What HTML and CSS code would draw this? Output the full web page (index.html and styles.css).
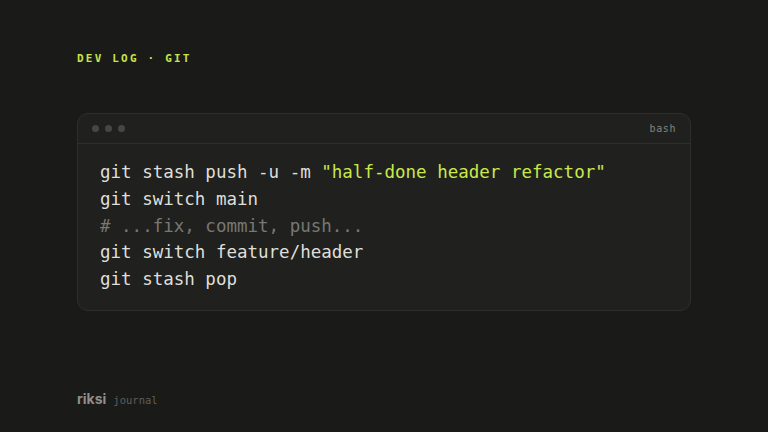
FILE: index.html
```html
<!DOCTYPE html>
<html>
<head>
<meta charset="utf-8">
<link rel="stylesheet" href="styles.css">
</head>
<body>
<div class="page">
  <div class="kicker">DEV LOG · GIT</div>
  <div class="card">
    <div class="bar">
      <div class="dots"><span class="dot"></span><span class="dot"></span><span class="dot"></span></div>
      <span class="lang">bash</span>
    </div>
    <div class="code">
      <div class="line">git stash push -u -m <span class="str">"half-done header refactor"</span></div>
      <div class="line">git switch main</div>
      <div class="line comment"># ...fix, commit, push...</div>
      <div class="line">git switch feature/header</div>
      <div class="line">git stash pop</div>
    </div>
  </div>
  <div class="footer"><span class="brand">riksi</span><span class="sub">journal</span></div>
</div>
</body>
</html>
```
FILE: styles.css
```css
html, body { margin: 0; padding: 0; }
body { background: #1a1a18; width: 768px; height: 432px; overflow: hidden; }
.page {
  height: 432px;
  box-sizing: border-box;
  padding: 52px 77px 0 77px;
  display: flex;
  flex-direction: column;
}
.kicker {
  font-family: "DejaVu Sans Mono", monospace;
  font-weight: bold;
  font-size: 11px;
  letter-spacing: 2.2px;
  color: #c5e34a;
  line-height: 14px;
}
.card {
  margin-top: 47px;
  height: 198px;
  box-sizing: border-box;
  background: #20211e;
  border: 1px solid #2e2f2b;
  border-radius: 11px;
  display: flex;
  flex-direction: column;
}
.bar {
  height: 29px;
  border-bottom: 1px solid #2e2f2b;
  display: flex;
  align-items: center;
  justify-content: space-between;
  padding: 0 14px 0 14px;
}
.dots { display: flex; gap: 6px; }
.dot { width: 7px; height: 7px; border-radius: 50%; background: #464743; }
.lang {
  font-family: "DejaVu Sans Mono", monospace;
  font-size: 10px;
  color: #84857f;
  letter-spacing: 0.6px;
}
.code {
  padding: 15px 22px 0 22px;
  font-family: "DejaVu Sans Mono", monospace;
  font-size: 17.5px;
  line-height: 26.8px;
  color: #dfdfda;
}
.line { white-space: pre; }
.str { color: #c9e84c; }
.comment { color: #777873; }
.footer {
  margin-top: 79px;
  display: flex;
  align-items: baseline;
  gap: 7px;
}
.brand {
  font-family: "Inter", "Liberation Sans", sans-serif;
  font-weight: bold;
  font-size: 14px;
  color: #8e8f8a;
}
.sub {
  font-family: "DejaVu Sans Mono", monospace;
  font-size: 10.5px;
  color: #5f605b;
}
```
